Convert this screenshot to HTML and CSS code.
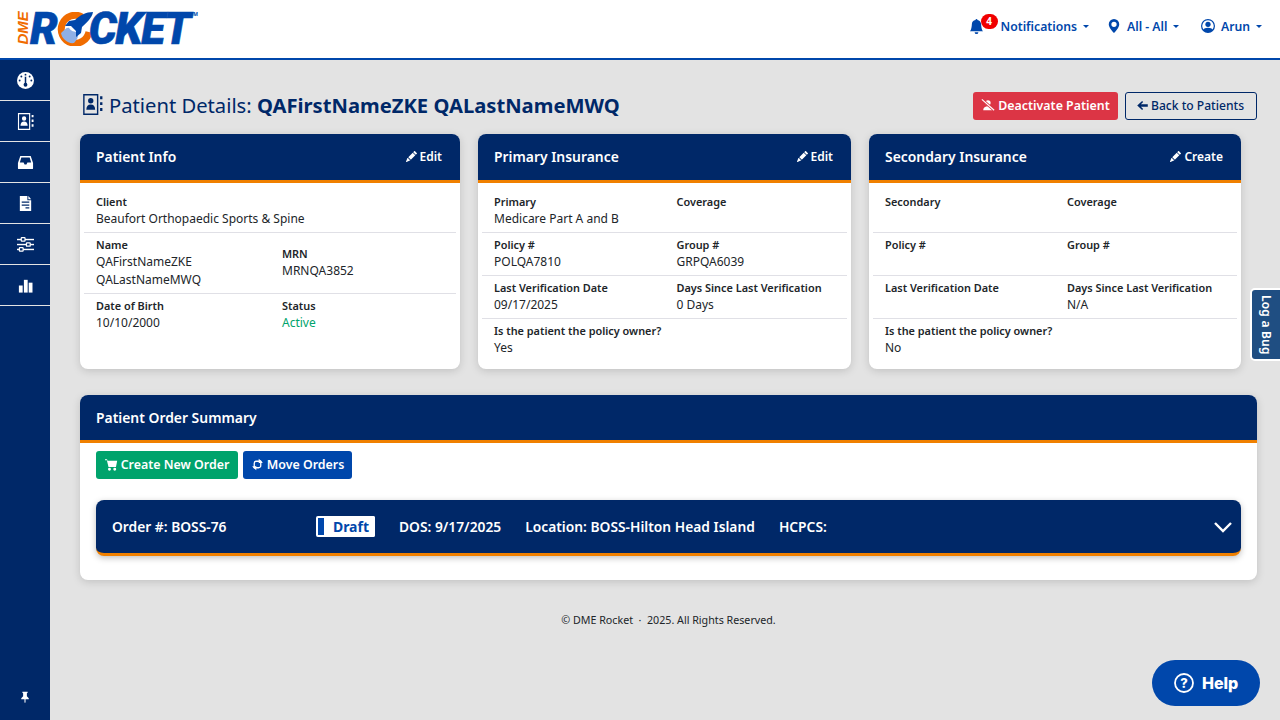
FILE: index.html
```html
<!DOCTYPE html>
<html>

<head>
    <link rel="stylesheet" href="styles.css">
</head>

<body>
    <header class="navbar">
        <div class="logo">
            <span class="logo-dme">DME</span>
            <span class="logo-word">R</span>
            <svg class="logo-o" viewBox="0 0 40 34">
                <path d="M27 5A14 14 0 1 0 34 20" fill="none" stroke="#f06c00" stroke-width="7"/>
                <path d="M6 21c3-2 5-6 8-5 2 3 5 4 9 4 1 4-1 8-4 11-6 1-12-4-13-10z" fill="#8fb0e6"/>
                <path d="M38 0c-7 0-13 3-18 8l-6 1-4 5 6 0 5 5 0 6 5-4 1-6c5-5 10-9 11-15z" fill="#0047ab"/>
            </svg>
            <span class="logo-word logo-rest">CKET</span>
            <span class="logo-tm">TM</span>
        </div>
        <nav class="nav-links">
            <a class="nav-item nav-bell">
                <svg class="nav-icon" viewBox="0 0 16 16"><path d="M8 16a2 2 0 0 0 2-2H6a2 2 0 0 0 2 2zm.995-14.901a1 1 0 1 0-1.990 0A5.002 5.002 0 0 0 3 6c0 1.098-.5 6-2 7h14c-1.500-1-2-5.902-2-7 0-2.420-1.720-4.440-4.005-4.901z"/></svg>
                <span class="badge">4</span>
                <span>Notifications</span>
                <i class="caret"></i>
            </a>
            <a class="nav-item">
                <svg class="nav-icon" viewBox="0 0 16 16"><path d="M8 16s6-5.686 6-10A6 6 0 0 0 2 6c0 4.314 6 10 6 10zm0-7a3 3 0 1 1 0-6 3 3 0 0 1 0 6z"/></svg>
                <span>All - All</span>
                <i class="caret"></i>
            </a>
            <a class="nav-item nav-user">
                <svg class="nav-icon" viewBox="0 0 16 16"><path d="M11 6a3 3 0 1 1-6 0 3 3 0 0 1 6 0z"/><path fill-rule="evenodd" d="M0 8a8 8 0 1 1 16 0A8 8 0 0 1 0 8zm8-6.500a6.500 6.500 0 0 0-5.100 10.500C3.600 11 5 10 8 10s4.400 1 5.100 2A6.500 6.500 0 0 0 8 1.500z"/></svg>
                <span>Arun</span>
                <i class="caret"></i>
            </a>
        </nav>
    </header>

    <div class="layout">
        <aside class="sidebar">
            <a class="side-item">
                <svg viewBox="0 0 18 18"><path fill="#fff" d="M9 0a9 9 0 1 1 0 18A9 9 0 0 1 9 0z"/><g fill="#002868"><rect x="8.200" y="5" width="1.600" height="8"/><circle cx="9" cy="13.500" r="2"/><circle cx="9" cy="2.800" r="1"/><circle cx="4.600" cy="4.800" r="1"/><circle cx="13.400" cy="4.800" r="1"/><circle cx="2.800" cy="9" r="1"/><circle cx="15.200" cy="9" r="1"/></g></svg>
            </a>
            <a class="side-item">
                <svg viewBox="0 0 18 18"><use href="#contact-book"/></svg>
            </a>
            <a class="side-item">
                <svg viewBox="0 0 18 18"><path fill="#fff" fill-rule="evenodd" d="M3.500 2h11L17 9.500V15a1 1 0 0 1-1 1H2a1 1 0 0 1-1-1V9.500zM4.600 3.600 3 9h4l1 2h2l1-2h4l-1.600-5.400z"/></svg>
            </a>
            <a class="side-item">
                <svg viewBox="0 0 18 18"><path fill="#fff" fill-rule="evenodd" d="M3 1h8v4.500h4V17H3zM12 1l3 3.500h-3zM5 7v1.300h8V7zM5 10v1.300h8V10zM9 13v1.300h4V13z"/></svg>
            </a>
            <a class="side-item">
                <svg viewBox="0 0 18 18"><g fill="#fff"><rect y="3" width="18" height="1.500"/><rect y="8.300" width="18" height="1.500"/><rect y="13.500" width="18" height="1.500"/></g><g fill="#002868" stroke="#fff" stroke-width="1.300"><rect x="4.500" y="1.800" width="4" height="3.600" rx=".6"/><rect x="10" y="7.200" width="4" height="3.600" rx=".6"/><rect x="2.500" y="12.400" width="4" height="3.600" rx=".6"/></g></svg>
            </a>
            <a class="side-item">
                <svg viewBox="0 0 18 18"><g fill="#fff"><rect x="2" y="9" width="4" height="7.500"/><rect x="7.300" y="3" width="4" height="13.500"/><rect x="12.400" y="6" width="4" height="10.500"/></g></svg>
            </a>
            <a class="side-pin">
                <svg viewBox="0 0 16 16"><path fill="#fff" d="M4.500 1h7v1.400L10.500 3v4l2.500 2.500V11H8.700v4L8 16l-.7-1v-4H3V9.500L5.500 7V3l-1-.6z"/></svg>
            </a>
        </aside>

        <main class="content">
            <div class="title-row">
                <h1 class="page-title">
                    <svg class="title-icon" viewBox="0 0 18 18"><use href="#contact-book"/></svg>
                    <span>Patient Details: <b>QAFirstNameZKE QALastNameMWQ</b></span>
                </h1>
                <div class="title-actions">
                    <button class="btn btn-danger">
                        <svg class="btn-icon" viewBox="0 0 16 16"><path fill="#fff" d="M8 2.500a3 3 0 1 1 0 6 3 3 0 0 1 0-6zM2.500 14c0-2.800 2.400-4.500 5.500-4.500s5.500 1.700 5.500 4.500z"/><path d="M1 1.500 15 14" stroke="#dc3545" stroke-width="3.200"/><path d="M1 1.500 15 14" stroke="#fff" stroke-width="1.300"/></svg>
                        Deactivate Patient
                    </button>
                    <button class="btn btn-outline">
                        <svg class="btn-icon" viewBox="0 0 16 16"><path fill="#002868" d="M7.500 2.500 8.800 3.800 6 6.500h8.500v3H6l2.800 2.700-1.300 1.300L1.500 8z"/></svg>
                        Back to Patients
                    </button>
                </div>
            </div>

            <div class="cards">
                <section class="card">
                    <div class="card-head">
                        <h2>Patient Info</h2>
                        <a class="card-link"><svg class="pencil" viewBox="0 0 16 16"><use href="#pencil"/></svg> Edit</a>
                    </div>
                    <div class="card-body">
                        <div class="row">
                            <div class="field field-wide"><label>Client</label><span>Beaufort Orthopaedic Sports &amp; Spine</span></div>
                        </div>
                        <div class="row row-center">
                            <div class="field"><label>Name</label><span>QAFirstNameZKE QALastNameMWQ</span></div>
                            <div class="field"><label>MRN</label><span>MRNQA3852</span></div>
                        </div>
                        <div class="row row-last">
                            <div class="field"><label>Date of Birth</label><span>10/10/2000</span></div>
                            <div class="field"><label>Status</label><span class="active">Active</span></div>
                        </div>
                    </div>
                </section>

                <section class="card">
                    <div class="card-head">
                        <h2>Primary Insurance</h2>
                        <a class="card-link"><svg class="pencil" viewBox="0 0 16 16"><use href="#pencil"/></svg> Edit</a>
                    </div>
                    <div class="card-body">
                        <div class="row">
                            <div class="field"><label>Primary</label><span>Medicare Part A and B</span></div>
                            <div class="field"><label>Coverage</label><span></span></div>
                        </div>
                        <div class="row">
                            <div class="field"><label>Policy #</label><span>POLQA7810</span></div>
                            <div class="field"><label>Group #</label><span>GRPQA6039</span></div>
                        </div>
                        <div class="row">
                            <div class="field"><label>Last Verification Date</label><span>09/17/2025</span></div>
                            <div class="field"><label>Days Since Last Verification</label><span>0 Days</span></div>
                        </div>
                        <div class="row row-last">
                            <div class="field field-wide"><label>Is the patient the policy owner?</label><span>Yes</span></div>
                        </div>
                    </div>
                </section>

                <section class="card">
                    <div class="card-head">
                        <h2>Secondary Insurance</h2>
                        <a class="card-link"><svg class="pencil" viewBox="0 0 16 16"><use href="#pencil"/></svg> Create</a>
                    </div>
                    <div class="card-body">
                        <div class="row">
                            <div class="field"><label>Secondary</label><span></span></div>
                            <div class="field"><label>Coverage</label><span></span></div>
                        </div>
                        <div class="row">
                            <div class="field"><label>Policy #</label><span></span></div>
                            <div class="field"><label>Group #</label><span></span></div>
                        </div>
                        <div class="row">
                            <div class="field"><label>Last Verification Date</label><span></span></div>
                            <div class="field"><label>Days Since Last Verification</label><span>N/A</span></div>
                        </div>
                        <div class="row row-last">
                            <div class="field field-wide"><label>Is the patient the policy owner?</label><span>No</span></div>
                        </div>
                    </div>
                </section>
            </div>

            <section class="card summary">
                <div class="card-head">
                    <h2>Patient Order Summary</h2>
                </div>
                <div class="summary-body">
                    <div class="summary-actions">
                        <button class="btn btn-green">
                            <svg class="btn-icon" viewBox="0 0 16 16"><path fill="#fff" d="M0 1.500h2.500L3 3.500h12l-1.500 7.500H4.300L2.300 2.800H0zM5.500 12a1.800 1.800 0 1 1 0 3.600 1.800 1.800 0 0 1 0-3.600zM12 12a1.800 1.800 0 1 1 0 3.600 1.800 1.800 0 0 1 0-3.600z"/></svg>
                            Create New Order
                        </button>
                        <button class="btn btn-blue">
                            <svg class="btn-icon" viewBox="0 0 16 16"><g fill="none" stroke="#fff" stroke-width="1.600"><path d="M4 12V6.500A2.500 2.500 0 0 1 6.500 4H10"/><path d="M12 4v5.500A2.500 2.500 0 0 1 9.500 12H6"/></g><path fill="#fff" d="M1.500 10h5L4 13.500zM9.500 1l3.500 3-3.500 2.500zM14.500 6h-5L12 2.500zM6.500 15 3 12l3.500-2.500z"/></svg>
                            Move Orders
                        </button>
                    </div>
                    <div class="order-row">
                        <span class="order-no">Order #: BOSS-76</span>
                        <span class="status-pill">Draft</span>
                        <span class="order-dos">DOS: 9/17/2025</span>
                        <span class="order-loc">Location: BOSS-Hilton Head Island</span>
                        <span>HCPCS:</span>
                        <svg class="chevron" viewBox="0 0 18 12"><path d="M1 2l8 8 8-8" fill="none" stroke="#fff" stroke-width="2.400"/></svg>
                    </div>
                </div>
            </section>

            <footer class="footer">© DME Rocket &nbsp;·&nbsp; 2025. All Rights Reserved.</footer>
        </main>
    </div>

    <a class="bug-tab">Log a Bug</a>
    <a class="help-btn">
        <svg class="help-icon" viewBox="0 0 20 20"><circle cx="10" cy="10" r="9" fill="none" stroke="#fff" stroke-width="1.800"/></svg>
        <span class="help-q">?</span>
        Help
    </a>

    <svg class="defs">
        <symbol id="contact-book" viewBox="0 0 18 18">
            <path fill-rule="evenodd" fill="currentColor" d="M1 0h13v18H1zM2.200 1.200v15.600h10.600V1.200zM7.500 3.500a2.300 2.300 0 1 1 0 4.600 2.300 2.300 0 0 1 0-4.600zM3.700 13.500c0-2.800 1.500-4.400 3.800-4.400s3.800 1.600 3.800 4.400z"/>
            <path fill="currentColor" d="M15.500 2h2v2.500h-2zM15.500 7h2v2.500h-2zM15.500 12h2v2.500h-2z"/>
        </symbol>
        <symbol id="pencil" viewBox="0 0 16 16">
            <path fill="currentColor" d="M12.854.146a.5.5 0 0 0-.707 0L10.500 1.793 14.207 5.500l1.647-1.646a.5.5 0 0 0 0-.708l-3-3zm.646 6.061L9.793 2.500 3.293 9H3.500a.5.5 0 0 1 .5.5v.5h.5a.5.5 0 0 1 .5.5v.5h.5a.5.5 0 0 1 .5.5v.5h.5a.5.5 0 0 1 .5.5v.207l6.500-6.500zm-7.468 7.468A.5.5 0 0 1 6 13.500V13h-.5a.5.5 0 0 1-.5-.5V12h-.5a.5.5 0 0 1-.5-.5V11h-.5a.5.5 0 0 1-.5-.5V10h-.5a.499.499 0 0 1-.175-.032l-.179.178a.5.5 0 0 0-.11.168l-2 5a.5.5 0 0 0 .65.65l5-2a.5.5 0 0 0 .168-.11l.178-.178z"/>
        </symbol>
    </svg>
</body>

</html>
```

FILE: styles.css
```css
* {
    box-sizing: border-box;
}

body {
    margin: 0;
    height: 720px;
    overflow: hidden;
    background-color: #e3e3e3;
    color: #212529;
    font-family: "Noto Sans", sans-serif;
    font-size: 12px;
}

.defs {
    display: none;
}

/* top bar */
.navbar {
    height: 60px;
    display: flex;
    align-items: center;
    justify-content: space-between;
    padding: 0 18px 4px 15px;
    background-color: #fff;
    border-bottom: 2px solid #0047ab;
}

.logo {
    position: relative;
    display: flex;
    align-items: center;
    height: 36px;
    margin-top: 3px;
    padding-left: 15px;
}

.logo-dme {
    position: absolute;
    left: -9px;
    top: 9px;
    width: 32px;
    transform: rotate(-90deg);
    color: #f06c00;
    font-family: "Liberation Sans", sans-serif;
    font-size: 15px;
    font-weight: bold;
    font-style: italic;
    text-align: center;
}

.logo-word {
    color: #0047ab;
    font-family: "Roboto", sans-serif;
    font-size: 44px;
    font-weight: 900;
    font-style: italic;
    line-height: 36px;
    -webkit-text-stroke: 0.6px #0047ab;
}

.logo-rest {
    letter-spacing: -1.5px;
}

.logo-o {
    width: 40px;
    height: 34px;
    margin: 0 -6px 0 -3px;
}

.logo-tm {
    align-self: flex-start;
    margin-left: 1px;
    color: #0047ab;
    font-size: 5px;
    font-weight: bold;
}

.nav-links {
    display: flex;
    align-items: center;
    gap: 18px;
    margin-bottom: 2px;
}

.nav-item {
    position: relative;
    display: flex;
    align-items: center;
    gap: 6px;
    color: #0047ab;
    font-size: 12.2px;
    font-weight: 600;
}

.nav-bell .nav-icon {
    width: 15px;
    height: 15px;
    margin-right: 11px;
}

.nav-user {
    margin-left: 3.5px;
}

.nav-icon {
    width: 14px;
    height: 14px;
    fill: #0047ab;
}

.badge {
    position: absolute;
    left: 12px;
    top: -4px;
    width: 17px;
    height: 15px;
    border-radius: 8px;
    background-color: #f00000;
    color: #fff;
    font-size: 10px;
    font-weight: bold;
    line-height: 15px;
    text-align: center;
}

.caret {
    width: 0;
    height: 0;
    border-top: 3px solid #0047ab;
    border-left: 3px solid transparent;
    border-right: 3px solid transparent;
}

/* side bar */
.layout {
    display: flex;
    height: 660px;
}

.sidebar {
    width: 50px;
    flex-shrink: 0;
    display: flex;
    flex-direction: column;
    background-color: #002868;
    color: #fff;
}

.side-item {
    height: 41px;
    display: flex;
    align-items: center;
    justify-content: center;
    border-bottom: 1px solid #e3e3e3;
}

.side-item svg {
    width: 17px;
    height: 17px;
}

.side-pin {
    margin-top: auto;
    height: 46px;
    display: flex;
    align-items: center;
    justify-content: center;
}

.side-pin svg {
    width: 12px;
    height: 12px;
}

/* main area */
.content {
    flex: 1;
    padding: 32px 23px 0 30px;
}

.title-row {
    display: flex;
    align-items: center;
    justify-content: space-between;
    height: 28px;
    margin-bottom: 14px;
}

.page-title {
    display: flex;
    align-items: center;
    margin: 0;
    padding: 0 0 3px 2px;
    color: #002868;
    font-size: 20.2px;
    font-weight: 400;
    white-space: nowrap;
}

.title-icon {
    width: 21px;
    height: 21px;
    margin-right: 6px;
}

.title-actions {
    display: flex;
    gap: 7px;
}

.btn {
    display: inline-flex;
    align-items: center;
    justify-content: center;
    gap: 3px;
    height: 28px;
    padding: 0 0 2px;
    border: 1px solid transparent;
    border-radius: 3px;
    color: #fff;
    font-family: "Noto Sans", sans-serif;
    font-size: 12.4px;
    font-weight: 600;
    white-space: nowrap;
}

.btn-icon {
    width: 13px;
    height: 13px;
}

.btn-danger {
    width: 145px;
    background-color: #dc3545;
}

.btn-danger .btn-icon {
    width: 14px;
    height: 14px;
}

.btn-outline {
    width: 132px;
    gap: 2px;
    padding-right: 2px;
    border-color: #002868;
    color: #002868;
    background-color: transparent;
    font-size: 12.1px;
    font-weight: 500;
}

.btn-green {
    width: 142px;
    background-color: #00a36c;
}

.btn-blue {
    width: 109px;
    background-color: #0047ab;
}

/* cards */
.cards {
    display: grid;
    grid-template-columns: 380px 373px 372px;
    gap: 18px;
}

.card {
    height: 235px;
    background-color: #fff;
    border-radius: 8px;
    box-shadow: 0 2px 8px rgba(0, 0, 0, 0.15);
    overflow: hidden;
}

.card-head {
    height: 49px;
    display: flex;
    align-items: center;
    justify-content: space-between;
    padding: 0 18px 2px 16px;
    background-color: #002868;
    border-bottom: 3px solid #f08000;
    color: #fff;
}

.card-head h2 {
    margin: 0;
    font-size: 13.9px;
    font-weight: 600;
}

.card-link {
    display: flex;
    align-items: center;
    gap: 3px;
    font-size: 12px;
    font-weight: 600;
}

.pencil {
    width: 11px;
    height: 11px;
}

.card-body {
    padding: 10.5px 4px 0;
}

.row {
    display: grid;
    grid-template-columns: 1fr 1fr;
    padding-bottom: 4px;
    border-bottom: 1px solid #e0e0e6;
    margin-bottom: 4px;
}

.row-center {
    align-items: center;
}

.row-last {
    border-bottom: none;
}

.field {
    padding-left: 12px;
}

.field-wide {
    grid-column: span 2;
}

.field label {
    display: block;
    margin-bottom: 1px;
    font-size: 10.9px;
    font-weight: 600;
    line-height: 15px;
}

.field span {
    display: block;
    min-height: 18px;
    font-size: 12px;
    line-height: 18px;
}

.active {
    color: #00a36c;
}

/* order summary */
.summary {
    height: 185px;
    margin-top: 26px;
    overflow: visible;
}

.summary .card-head {
    height: 48px;
    padding-bottom: 0;
    border-radius: 8px 8px 0 0;
}

.summary-body {
    padding: 8px 16px 0;
}

.summary-actions {
    display: flex;
    gap: 5px;
}

.order-row {
    display: flex;
    align-items: center;
    height: 56px;
    margin-top: 21px;
    padding: 0 9px 0 16px;
    background-color: #002868;
    border-bottom: 3px solid #f08000;
    border-radius: 8px;
    box-shadow: 0 2px 6px rgba(0, 0, 0, 0.25);
    color: #fff;
    font-size: 13.8px;
    font-weight: 600;
}

.order-no {
    width: 204px;
}

.status-pill {
    width: 59px;
    height: 21px;
    margin-right: 24px;
    padding-right: 6px;
    border-left: 8px solid #0047ab;
    border-radius: 2px;
    outline: 2px solid #fff;
    outline-offset: -2px;
    background-color: #fff;
    color: #0047ab;
    font-size: 14px;
    font-weight: 700;
    line-height: 21px;
    text-align: right;
}

.order-dos {
    margin-right: 24px;
}

.order-loc {
    margin-right: 24px;
}

.chevron {
    width: 18px;
    height: 12px;
    margin-left: auto;
}

.footer {
    margin-top: 33px;
    font-size: 10.7px;
    text-align: center;
}

/* floating tabs */
.bug-tab {
    position: fixed;
    right: -2px;
    top: 288px;
    width: 32px;
    height: 73px;
    border: 2px solid #fff;
    border-radius: 5px 0 0 5px;
    background-color: #1f4e82;
    color: #fff;
    font-size: 12px;
    font-weight: 600;
    letter-spacing: 0.2px;
    line-height: 28px;
    text-align: center;
    writing-mode: vertical-rl;
}

.help-btn {
    position: fixed;
    left: 1152px;
    top: 660px;
    width: 108px;
    height: 46px;
    display: flex;
    align-items: center;
    gap: 8px;
    padding-left: 22px;
    border-radius: 23px;
    background-color: #0047ab;
    color: #fff;
    font-family: "Inter", sans-serif;
    font-size: 16px;
    font-weight: 800;
}

.help-icon {
    width: 20px;
    height: 20px;
}

.help-q {
    position: absolute;
    left: 22px;
    width: 20px;
    text-align: center;
    font-size: 13px;
}
```
